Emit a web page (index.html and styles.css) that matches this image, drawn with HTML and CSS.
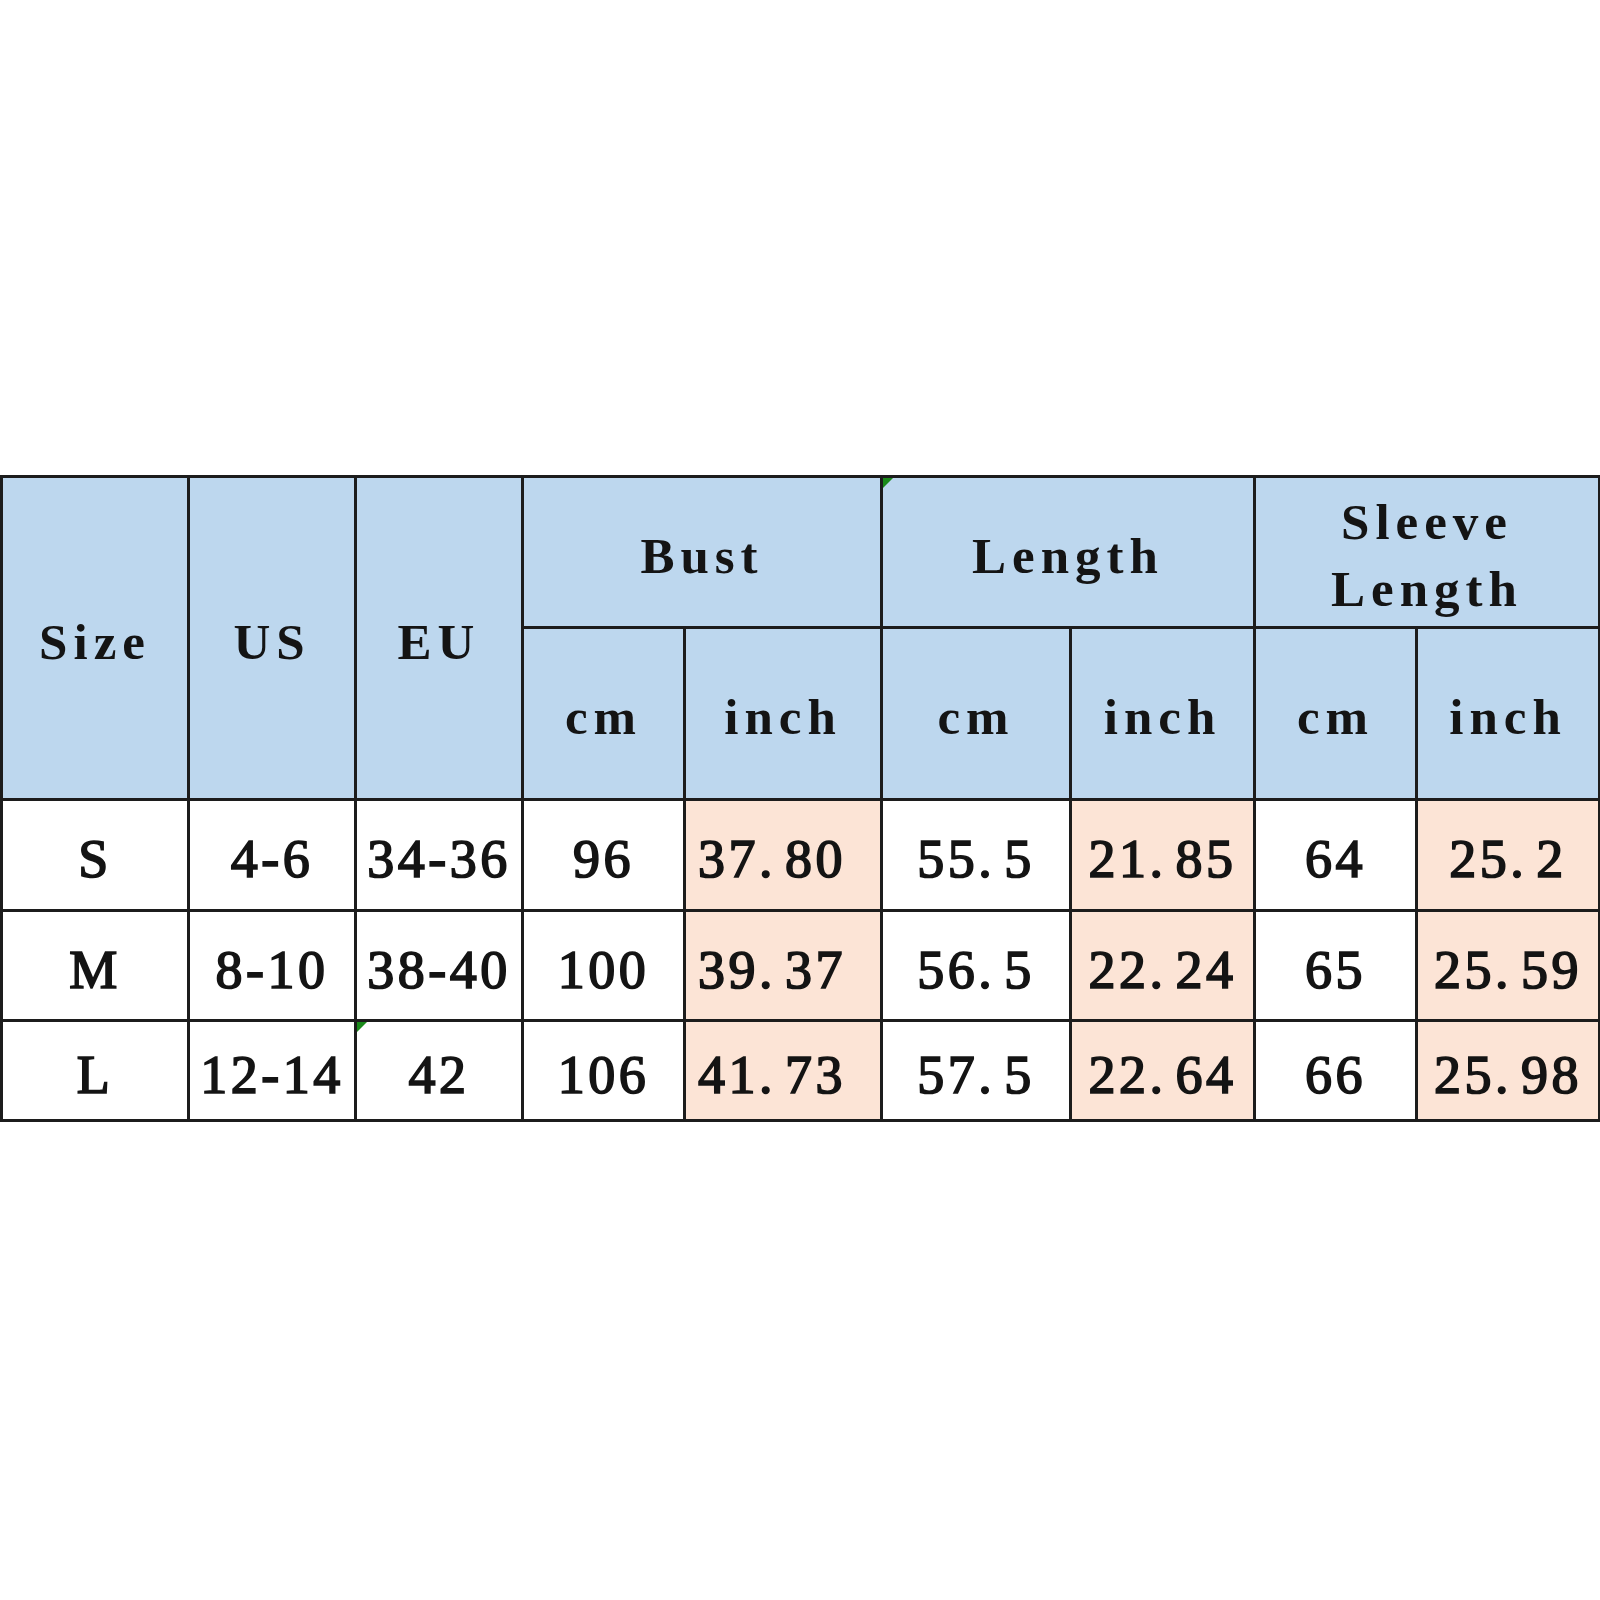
FILE: index.html
```html
<!DOCTYPE html>
<html>
<head>
<meta charset="utf-8">
<link rel="stylesheet" href="styles.css">
</head>
<body>
<div class="page">
<table class="chart">
  <colgroup>
    <col class="c1"><col class="c2"><col class="c3"><col class="c4"><col class="c5"><col class="c6"><col class="c7"><col class="c8"><col class="c9">
  </colgroup>
  <thead>
    <tr class="h1">
      <th rowspan="2">Size</th>
      <th rowspan="2">US</th>
      <th rowspan="2">EU</th>
      <th colspan="2">Bust</th>
      <th colspan="2" class="flag">Length</th>
      <th colspan="2">Sleeve<br>Length</th>
    </tr>
    <tr class="h2">
      <th>cm</th><th>inch</th>
      <th>cm</th><th>inch</th>
      <th>cm</th><th>inch</th>
    </tr>
  </thead>
  <tbody>
    <tr class="r1">
      <td>S</td><td>4-6</td><td>34-36</td><td>96</td><td class="inch left">37<span class="dot">.</span>80</td><td>55<span class="dot">.</span>5</td><td class="inch">21<span class="dot">.</span>85</td><td>64</td><td class="inch">25<span class="dot">.</span>2</td>
    </tr>
    <tr class="r2">
      <td>M</td><td>8-10</td><td>38-40</td><td>100</td><td class="inch left">39<span class="dot">.</span>37</td><td>56<span class="dot">.</span>5</td><td class="inch">22<span class="dot">.</span>24</td><td>65</td><td class="inch">25<span class="dot">.</span>59</td>
    </tr>
    <tr class="r3">
      <td>L</td><td>12-14</td><td class="flag">42</td><td>106</td><td class="inch left">41<span class="dot">.</span>73</td><td>57<span class="dot">.</span>5</td><td class="inch">22<span class="dot">.</span>64</td><td>66</td><td class="inch">25<span class="dot">.</span>98</td>
    </tr>
  </tbody>
</table>
</div>
</body>
</html>
```
FILE: styles.css
```css
html, body {
  margin: 0;
  padding: 0;
  background: #ffffff;
}

.page {
  padding-top: 475px;
  padding-left: 0;
}

.chart {
  border-collapse: collapse;
  table-layout: fixed;
  width: 1598px;
  font-family: "Liberation Serif", "Times New Roman", serif;
  color: #141414;
}

.c1 { width: 187px; }
.c2 { width: 167px; }
.c3 { width: 167px; }
.c4 { width: 162px; }
.c5 { width: 197px; }
.c6 { width: 189px; }
.c7 { width: 184px; }
.c8 { width: 162px; }
.c9 { width: 183px; }

.chart th,
.chart td {
  border: 3px solid #1c1c1c;
  text-align: center;
  vertical-align: middle;
  padding: 8px 0 0 0;
  position: relative;
}

.chart th {
  background: #bdd7ee;
  font-size: 51px;
  font-weight: bold;
  letter-spacing: 6px;
  line-height: 67px;
}

.chart td {
  background: #ffffff;
  font-size: 54px;
  font-weight: normal;
  -webkit-text-stroke: 1.7px #141414;
  letter-spacing: 3.5px;
  line-height: 60px;
}

.chart td .dot {
  margin-right: 9px;
}

.chart td.inch {
  background: #fce4d6;
}

.chart td.left {
  text-align: left;
  padding-left: 12px;
}

.h1 { height: 151px; }
.h2 { height: 172px; }
.r1 { height: 111px; }
.r2 { height: 110px; }
.r3 { height: 100px; }

.flag::before {
  content: "";
  position: absolute;
  left: 0;
  top: 0;
  width: 0;
  height: 0;
  border-top: 10px solid #1a8a1a;
  border-right: 10px solid transparent;
}
```
